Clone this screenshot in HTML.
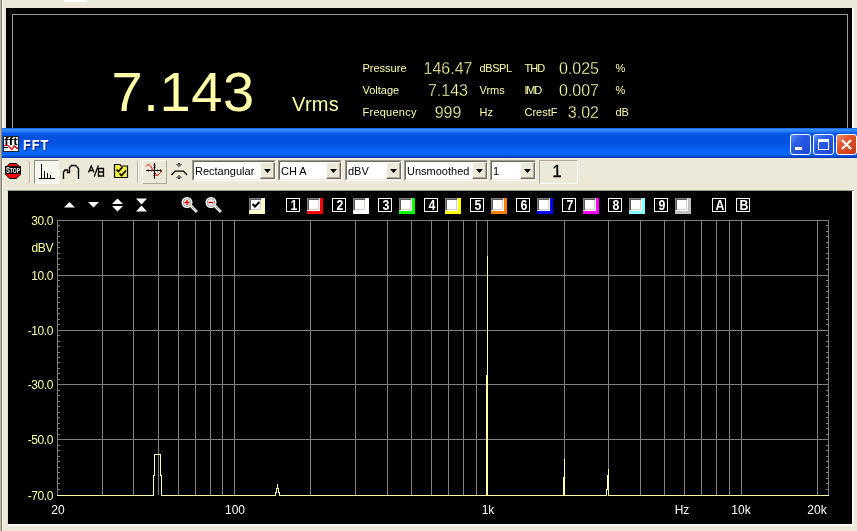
<!DOCTYPE html>
<html><head><meta charset="utf-8"><title>FFT</title>
<style>
html,body{margin:0;padding:0}
body{will-change:transform;width:857px;height:531px;background:#ECE9D8;position:relative;overflow:hidden;font-family:"Liberation Sans",sans-serif;}
div,span,svg,i,b{position:absolute;box-sizing:border-box}
.t{white-space:nowrap;line-height:1}
.y{color:#FFFFA8}
.lbl{font-size:11px;color:#FFFFA8}
.num{font-size:16px;color:#FFFFA8;-webkit-text-stroke:0.3px #000}
.unit{font-size:11px;color:#FFFFA8}
.combo{background:#fff;border:1px solid #9C9A8C;border-right-color:#fff;border-bottom-color:#fff;height:21px;top:160px}
.combo i{position:absolute;left:0;top:0;right:0;bottom:0;border:1px solid #6F6D62;border-right-color:#ECE9D8;border-bottom-color:#ECE9D8}
.combo b{position:absolute;right:0px;top:1px;width:15px;height:17px;background:#ECE9D8;border:1px solid #fff;border-right-color:#716F64;border-bottom-color:#716F64;box-shadow:inset -1px -1px 0 #ACA899}
.combo b:after{content:"";position:absolute;left:3px;top:6px;width:7px;height:4px;background:#000;clip-path:polygon(0 0,100% 0,50% 100%)}
.combo span{left:2px;top:5px;font-size:11px;color:#000;white-space:nowrap;line-height:1}
.nb{width:14px;height:14px;top:198px;border:1px solid #fff;color:#fff;font-weight:bold;font-size:14px;line-height:12px;text-align:center}
.nb span{left:-0.5px;top:-0.5px;width:14px;text-align:center;transform:scaleX(0.88)}
.cb{width:16px;height:16px;top:198px}
.cb i{position:absolute;left:0;top:0;width:13px;height:13px;background:#fff;border:1px solid #808080;border-right-color:#fff;border-bottom-color:#fff;box-shadow:inset 1px 1px 0 #5A5A5A, inset -1px -1px 0 #D4D0C8}
.ax{font-size:12px;color:#FFFFA8;text-align:right;width:40px;left:13px;line-height:1;letter-spacing:-0.4px}
.xl{font-size:12px;color:#fff;text-align:center;width:40px;line-height:1;top:504px}
</style></head><body>

<div style="left:64px;top:0;width:23px;height:2px;background:#fff"></div>
<div style="left:0;top:0;width:3px;height:531px;background:linear-gradient(90deg,#B8B5A8 0,#B8B5A8 1px,#858377 1px,#858377 2px,#F8F7EF 2px)"></div>
<div style="left:6px;top:8px;width:846px;height:120px;background:#000"></div>
<div style="left:852px;top:8px;width:2px;height:120px;background:#FDFDF8"></div>
<div style="left:12px;top:14px;width:836px;height:130px;border:1px solid #9a9a9a"></div>
<div class="t y" style="left:111.500px;top:63.500px;font-size:56px;letter-spacing:0.6px">7.143</div>
<div class="t y" style="left:292px;top:93.500px;font-size:20px;letter-spacing:0.300px">Vrms</div>
<div class="t lbl" style="left:362.500px;top:63px">Pressure</div>
<div class="t num" style="left:418px;width:60px;text-align:center;top:61px">146.47</div>
<div class="t unit" style="left:479.500px;top:63px;letter-spacing:-0.4px">dBSPL</div>
<div class="t lbl" style="left:524.500px;top:63px;letter-spacing:-0.9px">THD</div>
<div class="t num" style="left:539px;width:60px;text-align:right;top:61px">0.025</div>
<div class="t unit" style="left:615.500px;top:63px">%</div>
<div class="t lbl" style="left:362.500px;top:85px">Voltage</div>
<div class="t num" style="left:418px;width:60px;text-align:center;top:83px">7.143</div>
<div class="t unit" style="left:479.500px;top:85px">Vrms</div>
<div class="t lbl" style="left:524.500px;top:85px;letter-spacing:-1.2px">IMD</div>
<div class="t num" style="left:539px;width:60px;text-align:right;top:83px">0.007</div>
<div class="t unit" style="left:615.500px;top:85px">%</div>
<div class="t lbl" style="left:362.500px;top:107px;letter-spacing:0.25px">Frequency</div>
<div class="t num" style="left:418px;width:60px;text-align:center;top:105px">999</div>
<div class="t unit" style="left:479.500px;top:107px">Hz</div>
<div class="t lbl" style="left:524.500px;top:107px;letter-spacing:0px">CrestF</div>
<div class="t num" style="left:539px;width:60px;text-align:right;top:105px">3.02</div>
<div class="t unit" style="left:615.500px;top:107px">dB</div>
<div style="left:2px;top:128px;width:855px;height:30px;background:linear-gradient(#0B5EE5 0,#3A8EFF 1.500px,#2A80FA 3px,#0A5CE8 5.500px,#0351DE 9px,#0352E0 14px,#055CEC 19px,#0968F8 24px,#0860F0 27px,#0348D0 28.500px,#0030A8 30px)"></div>
<svg style="left:3px;top:136px" width="16" height="16" viewBox="0 0 16 16"><rect width="16" height="16" fill="#fff"/><rect x="0.5" y="0.5" width="15" height="15" fill="none" stroke="#222"/>
<text x="1.300" y="9.300" font-family="Liberation Sans,sans-serif" font-weight="bold" font-size="10.500" fill="#000" textLength="13.400" lengthAdjust="spacingAndGlyphs">fft</text>
<path d="M1 11.500 H5 M11 10 L15 12.500" fill="none" stroke="#000" stroke-width="1"/><path d="M1 9.500 L5 9.500 L9 13.500 L11 10 L15 13" fill="none" stroke="#e00000" stroke-width="1.200"/></svg>
<div class="t" style="left:23px;top:138px;font-size:14px;font-weight:bold;color:#fff;text-shadow:1px 1px 0 #0A1883;letter-spacing:1px;transform:scaleX(0.920);transform-origin:0 0">FFT</div>
<div style="left:790px;top:134px;width:21px;height:21px;border:1px solid #fff;border-radius:3px;background:linear-gradient(135deg,#5B8CF5 0,#2A5CE6 35%,#1C47D0 100%)"><div style="left:4px;top:12px;width:7px;height:3px;background:#fff"></div></div>
<div style="left:813px;top:134px;width:21px;height:21px;border:1px solid #fff;border-radius:3px;background:linear-gradient(135deg,#5B8CF5 0,#2A5CE6 35%,#1C47D0 100%)"><div style="left:4px;top:4px;width:11px;height:11px;border:1px solid #fff;border-top-width:3px"></div></div>
<div style="left:836px;top:134px;width:21px;height:21px;border:1px solid #fff;border-radius:3px;background:linear-gradient(135deg,#F0906E 0,#E0502C 40%,#C43818 100%)"><svg style="left:0;top:0" width="19" height="19"><path d="M5 5 L14 14 M14 5 L5 14" stroke="#fff" stroke-width="2.2" fill="none"/></svg></div>
<div style="left:29px;top:161px;width:2px;height:22px;border-left:1px solid #B5B2A3;border-right:1px solid #F6F5EC"></div>
<div style="left:34px;top:160px;width:25px;height:24px;background:#F6F5EE;border:1px solid #8E8C7C;border-right-color:#fff;border-bottom-color:#fff"></div>
<div style="left:137px;top:161px;width:2px;height:22px;border-left:1px solid #B5B2A3;border-right:1px solid #F6F5EC"></div>
<div style="left:142px;top:160px;width:25px;height:24px;border:1px solid #fff;border-right-color:#ACA899;border-bottom-color:#ACA899"></div>
<svg style="left:0;top:158px" width="200" height="32" viewBox="0 158 200 32">
<path d="M9.500 163.500 H16.500 L20.500 167.500 V174.500 L16.500 178.500 H9.500 L5.500 174.500 V167.500 Z" fill="#FF0000" stroke="#000" stroke-width="1"/>
<rect x="5" y="166" width="16" height="8" fill="#000"/>
<text x="6" y="173.300" font-family="Liberation Sans,sans-serif" font-weight="bold" font-size="9" fill="#fff" textLength="14" lengthAdjust="spacingAndGlyphs">S<tspan font-size="7.800">TOP</tspan></text>
<path d="M41.500 164 V178 M39 178.500 H55 M44.500 171 V178 M47.500 173 V178 M50.500 175 V178" stroke="#000" stroke-width="1.200" fill="none" shape-rendering="crispEdges"/>
<path d="M63.500 179 V172 L65 170 H67.500 V172.500 H69.500 V167.500 L71.500 165.500 H75.500 L78.500 168.500 V179" stroke="#000" stroke-width="1.350" fill="none"/>
<path d="M88.500 172.500 L91.200 166 L94 172.500 M89.500 170.500 H93 M98.300 165.500 L94.300 176.500 M98.500 168.500 H103.500 V176 H98.500 Z M98.500 172 H103.500" stroke="#000" stroke-width="1.300" fill="none"/>
<path d="M114.500 177.500 V164.500 H120 L121 166 H127.500 V177.500 Z" fill="#F4F040" stroke="#000" stroke-width="1.200"/>
<path d="M116.500 169.500 L118.500 171.500 L122.500 167 M119.500 173.500 L121.500 175.500 L126 170.500" stroke="#000" stroke-width="1.700" fill="none"/>
<path d="M146 166.500 L148.500 164 L150.500 166 L157 176 L162 171" stroke="#FF0000" stroke-width="1" fill="none"/>
<path d="M154.500 163 V179 M146 170.500 H162" stroke="#000" stroke-width="1.100"/>
<path d="M153 165.500 H156 M153 167.500 H156 M153 173.500 H156 M153 175.500 H156 M148.500 169 V172 M151.500 169 V172 M157.500 169 V172 M160.500 169 V172" stroke="#000" stroke-width="0.450"/>
<path d="M171.500 175 L175 171 H183.500 L187 175" stroke="#000" stroke-width="1.250" fill="none"/>
<path d="M176.500 164 L179 166.500 L181.500 164 M176.500 178 L179 175.500 L181.500 178" stroke="#000" stroke-width="1" fill="none"/>
<rect x="178" y="163" width="2" height="1.500" fill="#000"/><rect x="178" y="177.500" width="2" height="1.500" fill="#000"/>
</svg>
<div class="combo" style="left:192px;width:84px"><i></i><span>Rectangular</span><b></b></div>
<div class="combo" style="left:278px;width:64px"><i></i><span>CH A</span><b></b></div>
<div class="combo" style="left:345px;width:57px"><i></i><span>dBV</span><b></b></div>
<div class="combo" style="left:404px;width:84px"><i></i><span>Unsmoothed</span><b></b></div>
<div class="combo" style="left:490px;width:46px"><i></i><span>1</span><b></b></div>
<div style="left:539px;top:160px;width:39px;height:24px;border:1px solid #ACA899;border-right-color:#fff;border-bottom-color:#fff"></div>
<div class="t" style="left:537.500px;width:39px;text-align:center;top:162.500px;font-size:17px;color:#000;-webkit-text-stroke:0.3px #000">1</div>
<div style="left:7px;top:190px;width:847px;height:336px;background:#FDFDF8;border-left:1px solid #E4E1D0;border-top:1px solid #9D9A8C"></div>
<div style="left:8px;top:191px;width:844px;height:333px;background:#000"></div>
<svg style="left:60px;top:195px" width="100" height="20"><g fill="#fff">
<path d="M4 12.5 L9.500 7 L15 12.5 Z"/><path d="M28 7 L33.5 12.5 L39 7 Z"/>
<path d="M52 9 L57.500 3.500 L63 9 Z"/><path d="M52 11 L57.500 16.5 L63 11 Z"/>
<path d="M76 3.500 L81.500 9.5 L87 3.500 Z"/><path d="M76 16.5 L81.500 10.5 L87 16.5 Z"/></g></svg>
<svg style="left:180.5px;top:196px" width="18" height="19"><path d="M10 10 L15.900 15.900" stroke="#fff" stroke-width="2.800"/><path d="M11 11 L15.600 15.600" stroke="#333" stroke-width="0.900" stroke-dasharray="1 1"/><rect x="9.300" y="9.300" width="1.500" height="1.500" fill="#F0E000"/><circle cx="6" cy="6.500" r="4.900" fill="#E6EEEE" stroke="#fff" stroke-width="1.200"/><circle cx="6" cy="6.500" r="3.900" fill="none" stroke="#A4A4A4" stroke-width="1"/><path d="M3.500 6.500 H8.500 M6 4 V9" stroke="#F00000" stroke-width="1.400"/></svg>
<svg style="left:204.5px;top:196px" width="18" height="19"><path d="M10 10 L15.900 15.900" stroke="#fff" stroke-width="2.800"/><path d="M11 11 L15.600 15.600" stroke="#333" stroke-width="0.900" stroke-dasharray="1 1"/><rect x="9.300" y="9.300" width="1.500" height="1.500" fill="#F0E000"/><circle cx="6" cy="6.500" r="4.900" fill="#E6EEEE" stroke="#fff" stroke-width="1.200"/><circle cx="6" cy="6.500" r="3.900" fill="none" stroke="#A4A4A4" stroke-width="1"/><path d="M3.500 6.500 H8.500" stroke="#F00000" stroke-width="1.400"/></svg>
<div class="cb" style="left:249px;background:#FFFFC8"><i></i><svg style="left:2px;top:2px" width="10" height="10"><path d="M1.500 4 L4 6.500 L8.500 2" stroke="#000" stroke-width="2" fill="none"/></svg></div>
<div class="nb" style="left:286px"><span>1</span></div>
<div class="cb" style="left:307px;background:#FF0000"><i></i></div>
<div class="nb" style="left:332px"><span>2</span></div>
<div class="cb" style="left:353px;background:#FFFFFF"><i></i></div>
<div class="nb" style="left:378px"><span>3</span></div>
<div class="cb" style="left:399px;background:#00FF00"><i></i></div>
<div class="nb" style="left:424px"><span>4</span></div>
<div class="cb" style="left:445px;background:#FFFF00"><i></i></div>
<div class="nb" style="left:470px"><span>5</span></div>
<div class="cb" style="left:491px;background:#FF8000"><i></i></div>
<div class="nb" style="left:516px"><span>6</span></div>
<div class="cb" style="left:537px;background:#0000FF"><i></i></div>
<div class="nb" style="left:562px"><span>7</span></div>
<div class="cb" style="left:583px;background:#FF00FF"><i></i></div>
<div class="nb" style="left:608px"><span>8</span></div>
<div class="cb" style="left:629px;background:#80FFFF"><i></i></div>
<div class="nb" style="left:654px"><span>9</span></div>
<div class="cb" style="left:675px;background:#C0C0C0"><i></i></div>
<div class="nb" style="left:712px"><span>A</span></div><div class="nb" style="left:736px"><span>B</span></div>
<svg style="left:0;top:0" width="857" height="531" shape-rendering="crispEdges"><path d="M102.5 220 V495 M133.5 220 V495 M158.5 220 V495 M178.5 220 V495 M195.5 220 V495 M210.5 220 V495 M222.5 220 V495 M234.5 220 V495 M310.5 220 V495 M355.5 220 V495 M387.5 220 V495 M411.5 220 V495 M431.5 220 V495 M448.5 220 V495 M463.5 220 V495 M476.5 220 V495 M487.5 220 V495 M564.5 220 V495 M608.5 220 V495 M640.5 220 V495 M664.5 220 V495 M684.5 220 V495 M701.5 220 V495 M716.5 220 V495 M729.5 220 V495 M741.5 220 V495 M817.5 220 V495 M57 275.5 H829 M57 330.5 H829 M57 384.5 H829 M57 439.5 H829 M57.5 220 V495 M828.500 220 V495 M57 220.500 H829 M58 225.5 H60 M826 225.5 H828 M58 231.5 H60 M826 231.5 H828 M58 236.5 H60 M826 236.5 H828 M58 242.5 H60 M826 242.5 H828 M58 247.5 H60 M826 247.5 H828 M58 253.5 H60 M826 253.5 H828 M58 258.5 H60 M826 258.5 H828 M58 264.5 H60 M826 264.5 H828 M58 269.5 H60 M826 269.5 H828 M58 275.5 H60 M826 275.5 H828 M58 280.5 H60 M826 280.5 H828 M58 286.5 H60 M826 286.5 H828 M58 291.5 H60 M826 291.5 H828 M58 297.5 H60 M826 297.5 H828 M58 302.5 H60 M826 302.5 H828 M58 308.5 H60 M826 308.5 H828 M58 313.5 H60 M826 313.5 H828 M58 319.5 H60 M826 319.5 H828 M58 324.5 H60 M826 324.5 H828 M58 330.5 H60 M826 330.5 H828 M58 335.5 H60 M826 335.5 H828 M58 341.5 H60 M826 341.5 H828 M58 346.5 H60 M826 346.5 H828 M58 352.5 H60 M826 352.5 H828 M58 357.5 H60 M826 357.5 H828 M58 362.5 H60 M826 362.5 H828 M58 368.5 H60 M826 368.5 H828 M58 373.5 H60 M826 373.5 H828 M58 379.5 H60 M826 379.5 H828 M58 384.5 H60 M826 384.5 H828 M58 390.5 H60 M826 390.5 H828 M58 395.5 H60 M826 395.5 H828 M58 401.5 H60 M826 401.5 H828 M58 406.5 H60 M826 406.5 H828 M58 412.5 H60 M826 412.5 H828 M58 417.5 H60 M826 417.5 H828 M58 423.5 H60 M826 423.5 H828 M58 428.5 H60 M826 428.5 H828 M58 434.5 H60 M826 434.5 H828 M58 439.5 H60 M826 439.5 H828 M58 445.5 H60 M826 445.5 H828 M58 450.5 H60 M826 450.5 H828 M58 456.5 H60 M826 456.5 H828 M58 461.5 H60 M826 461.5 H828 M58 467.5 H60 M826 467.5 H828 M58 472.5 H60 M826 472.5 H828 M58 478.5 H60 M826 478.5 H828 M58 483.5 H60 M826 483.5 H828 M58 489.5 H60 M826 489.5 H828 " stroke="#808080" stroke-width="1" fill="none"/><path d="M57 495.5 H153.500 V475.500 H154.500 V454.500 H160.500 V475.500 H161.500 V495.500 H275.500 V492.500 H276.500 V488.5 H277.500 V483.500 V488.500 H278.500 V492.500 H279.500 V495.500 H486.500 V375.500 H487.500 V255.500 V495.500 H563.500 V477.500 H564.500 V458.5 V495.500 H606.500 V489.500 H607.500 V475.500 H608.500 V468.500 V495.500 H829" stroke="#FFFFA8" stroke-width="1" fill="none"/></svg>
<div class="ax" style="top:215px">30.0</div>
<div class="ax" style="top:270px">10.0</div>
<div class="ax" style="top:325px">-10.0</div>
<div class="ax" style="top:379px">-30.0</div>
<div class="ax" style="top:434px">-50.0</div>
<div class="ax" style="top:490px">-70.0</div>
<div class="ax" style="top:242px">dBV</div>
<div class="xl" style="left:38px">20</div>
<div class="xl" style="left:215px">100</div>
<div class="xl" style="left:468px">1k</div>
<div class="xl" style="left:721px">10k</div>
<div class="xl" style="left:797px">20k</div>
<div class="xl" style="left:662px">Hz</div>
</body></html>
